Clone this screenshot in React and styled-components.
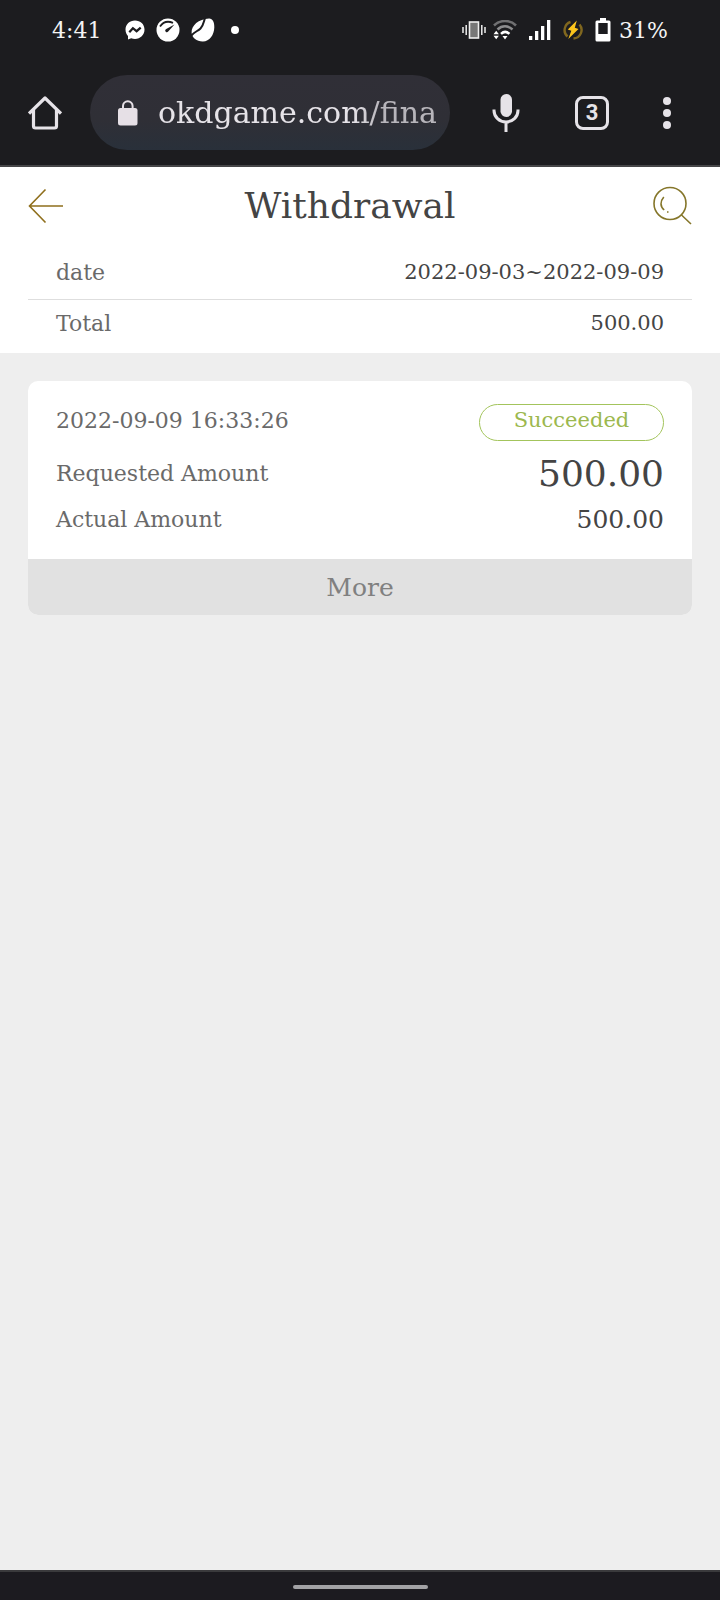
import React from 'react'
import styled, { createGlobalStyle } from 'styled-components'

const GlobalStyle = createGlobalStyle`
  * {
    box-sizing: border-box;
  }
  body {
    margin: 0;
    background: #eee;
    font-family: "DejaVu Serif", serif;
  }
  button {
    border: 0;
    padding: 0;
    background: none;
    font-family: inherit;
    cursor: pointer;
  }
  svg {
    display: block;
    flex: none;
  }
`

const Page = styled.div`
  display: flex;
  flex-direction: column;
  min-height: 100vh;
`

const Browser = styled.header`
  background: #1c1c1f;
  border-bottom: 2px solid #454547;
`

const StatusBar = styled.div`
  display: flex;
  justify-content: space-between;
  align-items: center;
  height: 60px;
  padding: 0 52px;
  color: #f4f4f4;
  font-size: 22px;
`

const StatusGroup = styled.div`
  display: flex;
  align-items: center;
  gap: ${({ $gap }) => $gap}px;
`

const Toolbar = styled.div`
  display: grid;
  grid-template-columns: 90px minmax(0, 1fr) 112px 60px 90px;
  align-items: center;
  height: 105px;
  padding-right: 8px;
`

const ToolButton = styled.button`
  display: flex;
  justify-content: center;
  align-items: center;
  height: 75px;
`

const AddressBar = styled.label`
  display: flex;
  align-items: center;
  gap: 20px;
  height: 75px;
  padding: 0 14px 0 28px;
  border-radius: 38px;
  background: linear-gradient(#302f37, #2f2f36 60%, #29303a);
`

const AddressInput = styled.input`
  flex: 1;
  min-width: 0;
  padding: 0;
  border: 0;
  outline: 0;
  background: none;
  color: #e6e3e8;
  font-family: inherit;
  font-size: 30px;
  mask-image: linear-gradient(to right, #000 70%, rgba(0, 0, 0, 0.75) 80%);
`

const Summary = styled.section`
  padding: 0 28px 7px;
  background: #fff;
`

const TitleBar = styled.div`
  display: grid;
  grid-template-columns: 34px 1fr 54px;
  align-items: center;
  height: 78px;
`

const Title = styled.h1`
  margin: 0;
  color: #444;
  font-size: 36px;
  font-weight: 400;
  line-height: 44px;
  text-align: center;
`

const SearchButton = styled.button`
  justify-self: end;
`

const SummaryRow = styled.div`
  display: flex;
  justify-content: space-between;
  align-items: center;
  height: ${({ $divider }) => ($divider ? 55 : 46)}px;
  padding: 0 28px;
  border-bottom: ${({ $divider }) => ($divider ? '1px solid #dedede' : '0')};
  font-size: 22px;
`

const Label = styled.span`
  color: #6a6a6a;
`

const Value = styled.span`
  color: #444;
  font-size: ${({ $size }) => $size}px;
`

const List = styled.main`
  flex: 1;
  padding: 28px;
`

const Card = styled.article`
  overflow: hidden;
  border-radius: 10px;
  background: #fff;
`

const CardBody = styled.div`
  padding: 23px 28px 17px;
  font-size: 22px;
`

const CardTop = styled.div`
  display: flex;
  justify-content: space-between;
  height: 38px;
  margin-bottom: 8px;
  line-height: 33px;
`

const CardRow = styled.div`
  display: flex;
  justify-content: space-between;
  align-items: center;
  height: 46px;
`

const Status = styled.span`
  width: 185px;
  height: 37px;
  border: 1px solid #a3c45c;
  border-radius: 19px;
  color: #9cb84e;
  font-size: 21px;
  line-height: 31px;
  text-align: center;
`

const MoreButton = styled.button`
  display: block;
  width: 100%;
  height: 56px;
  background: #e1e1e1;
  color: #808080;
  font-size: 25px;
`

const NavBar = styled.footer`
  display: flex;
  justify-content: center;
  align-items: center;
  height: 30px;
  padding-top: 2px;
  border-top: 2px solid #3a3a3c;
  background: #1c1b20;
`

const NavHandle = styled.div`
  width: 135px;
  height: 4px;
  border-radius: 2px;
  background: #a2a2a5;
`

const MessengerIcon = () => (
  <svg width="20" height="20" viewBox="0 0 20 20">
    <path d="M10 .5C4.600.5.500 4.300.500 9.600c0 2.700 1.100 5 2.500 6.400V19.500l3.200-1.200c1.100.4 2.500.7 3.800.7 5.400 0 9.500-4 9.500-9.400S15.400.5 10 .5z" fill="#fff" />
    <path d="M4.300 12.200l3.600-4 3.700 3 4.100-3.600" fill="none" stroke="#1c1c1f" strokeWidth="2.200" />
  </svg>
)

const GaugeIcon = () => (
  <svg width="24" height="24" viewBox="0 0 24 24">
    <circle cx="12" cy="12" r="11.500" fill="#fff" />
    <path d="M4 8.500C7 4 12 2.800 17 4.800" fill="none" stroke="#1c1c1f" strokeWidth="1.800" />
    <path d="M18.500 6.500L9.800 11.200a1.700 1.700 0 1 0 2.400 2.400z" fill="#1c1c1f" />
  </svg>
)

const LeafIcon = () => (
  <svg width="24" height="24" viewBox="0 0 24 24">
    <path d="M18 .5C21.500.3 23.500 4 23.300 9.500 23.100 17 18.500 23.300 12 23.500 6 23.700 1 20 .6 14.500.3 7.500 7.500 1 18 .5z" fill="#fff" />
    <path d="M14 0C12.500 4.500 12.500 7.500 9.500 10.500 6.500 13.500 3.500 13.500.5 17.500" fill="none" stroke="#1c1c1f" strokeWidth="2" />
  </svg>
)

const VibrateIcon = () => (
  <svg width="24" height="20" viewBox="0 0 24 20">
    <rect x="7.500" y="2" width="9" height="16" fill="#777" stroke="#eee" strokeWidth="1.600" />
    <path d="M1 7v6M4.200 5v10M19.800 5v10M23 7v6" stroke="#eee" strokeWidth="1.500" />
  </svg>
)

const WifiIcon = () => (
  <svg width="24" height="20" viewBox="0 0 24 20">
    <path d="M1 5.500C7-.5 17-.5 23 5.500" fill="none" stroke="#707072" strokeWidth="2.500" />
    <path d="M4.500 9.500c4.500-4.200 10.500-4.200 15 0" fill="none" stroke="#8c8c8e" strokeWidth="2.500" />
    <path d="M8 13.800c2.600-2.400 5.800-2.400 8.400 0" fill="none" stroke="#fff" strokeWidth="2.500" />
    <path d="M9.500 16h5L12 19.500zM.5 14.300l2.700-3.500 2.700 3.500zM.5 15.800h5.400l-2.700 3.500z" fill="#fff" />
  </svg>
)

const SignalIcon = () => (
  <svg width="22" height="20" viewBox="0 0 22 20">
    <path d="M0 16h3.300v4H0zM6 11h3.300v9H6zM12 6h3.300v14H12zM18 0h3.300v20H18z" fill="#fff" />
  </svg>
)

const BoltIcon = () => (
  <svg width="20" height="20" viewBox="0 0 20 20">
    <path d="M7.500 2A8.500 8.500 0 0 0 4.500 16.500M10.500 18.500A8.500 8.500 0 0 0 16.500 4.500" fill="none" stroke="#80671f" strokeWidth="2.400" />
    <path d="M13.800.5L4.800 9.500l3.500 1.300-3 8.200L15.500 9l-3.700-1.300z" fill="#fcc51c" />
  </svg>
)

const BatteryIcon = () => (
  <svg width="16" height="24" viewBox="0 0 16 24">
    <path d="M5 0h6v2.500H14a1.500 1.500 0 0 1 1.500 1.500v18a1.500 1.500 0 0 1-1.500 1.500H2A1.500 1.500 0 0 1 .5 22V4A1.500 1.500 0 0 1 2 2.500h3z" fill="#fff" />
    <path d="M3.300 5h9.400v11H3.300z" fill="#1c1c1f" />
  </svg>
)

const HomeIcon = () => (
  <svg width="34" height="34" viewBox="0 0 34 34" fill="none" stroke="#e6e3e8" strokeWidth="3.200" strokeLinejoin="round">
    <path d="M1 17.500L17 2l16 15.500" />
    <path d="M5.500 14v16a2 2 0 0 0 2 2h19a2 2 0 0 0 2-2V14" />
  </svg>
)

const LockIcon = () => (
  <svg width="20" height="26" viewBox="0 0 20 26">
    <rect x="0" y="8" width="19.500" height="17.500" rx="2.500" fill="#e6e0e6" />
    <path d="M5 9V6a4.800 4.800 0 0 1 9.600 0v3" fill="none" stroke="#e6e0e6" strokeWidth="2" />
  </svg>
)

const MicIcon = () => (
  <svg width="28" height="38" viewBox="0 0 28 38">
    <rect x="8.500" y="0" width="11.500" height="23" rx="5.700" fill="#e6e3e8" />
    <path d="M2 15.500v1a12 11.500 0 0 0 24 0v-1M14 28v10" fill="none" stroke="#e6e3e8" strokeWidth="3" />
  </svg>
)

const DotsIcon = () => (
  <svg width="8" height="32" viewBox="0 0 8 32" fill="#e6e3e8">
    <circle cx="4" cy="4" r="4" />
    <circle cx="4" cy="16" r="4" />
    <circle cx="4" cy="28" r="4" />
  </svg>
)

const TabCount = styled.span`
  width: 34px;
  height: 34px;
  border: 3px solid #e6e3e8;
  border-radius: 8px;
  color: #e6e3e8;
  font: 700 22px/28px Roboto, sans-serif;
  text-align: center;
`

const BackIcon = () => (
  <svg width="35" height="36" viewBox="0 0 35 36">
    <path d="M17.500 1.500L1.500 18l16 16.500M1.500 18H35" fill="none" stroke="#8f6f1c" strokeWidth="1.600" />
  </svg>
)

const SearchIcon = () => (
  <svg width="39" height="40" viewBox="0 0 39 40" fill="none" stroke="#85762a" strokeWidth="1.600">
    <circle cx="17" cy="17.500" r="16" />
    <path d="M28.500 29L38 38M10.800 11C7 15.500 7 20.500 11.200 24M14 26h1.500" />
  </svg>
)

function App() {
  return (
    <Page>
      <GlobalStyle />
      <Browser>
        <StatusBar>
          <StatusGroup $gap={16}>
            <StatusGroup $gap={24}>
              <span>4:41</span>
              <StatusGroup $gap={11}>
                <MessengerIcon />
                <GaugeIcon />
                <LeafIcon />
              </StatusGroup>
            </StatusGroup>
            <svg width="8" height="8" viewBox="0 0 8 8">
              <circle cx="4" cy="4" r="4" fill="#fff" />
            </svg>
          </StatusGroup>
          <StatusGroup $gap={12}>
            <StatusGroup $gap={7}>
              <VibrateIcon />
              <WifiIcon />
            </StatusGroup>
            <SignalIcon />
            <BoltIcon />
            <StatusGroup $gap={8}>
              <BatteryIcon />
              <span>31%</span>
            </StatusGroup>
          </StatusGroup>
        </StatusBar>
        <Toolbar>
          <ToolButton aria-label="Home">
            <HomeIcon />
          </ToolButton>
          <AddressBar>
            <LockIcon />
            <AddressInput aria-label="Address" defaultValue="okdgame.com/fina" />
          </AddressBar>
          <ToolButton aria-label="Voice search">
            <MicIcon />
          </ToolButton>
          <ToolButton aria-label="Tabs">
            <TabCount>3</TabCount>
          </ToolButton>
          <ToolButton aria-label="Menu">
            <DotsIcon />
          </ToolButton>
        </Toolbar>
      </Browser>

      <Summary>
        <TitleBar>
          <button aria-label="Back">
            <BackIcon />
          </button>
          <Title>Withdrawal</Title>
          <SearchButton aria-label="Search">
            <SearchIcon />
          </SearchButton>
        </TitleBar>
        <SummaryRow $divider>
          <Label>date</Label>
          <Value $size={21}>2022-09-03~2022-09-09</Value>
        </SummaryRow>
        <SummaryRow>
          <Label>Total</Label>
          <Value $size={21}>500.00</Value>
        </SummaryRow>
      </Summary>

      <List>
        <Card>
          <CardBody>
            <CardTop>
              <Label>2022-09-09 16:33:26</Label>
              <Status>Succeeded</Status>
            </CardTop>
            <CardRow>
              <Label>Requested Amount</Label>
              <Value $size={36}>500.00</Value>
            </CardRow>
            <CardRow>
              <Label>Actual Amount</Label>
              <Value $size={25}>500.00</Value>
            </CardRow>
          </CardBody>
          <MoreButton>More</MoreButton>
        </Card>
      </List>

      <NavBar>
        <NavHandle />
      </NavBar>
    </Page>
  )
}

export default App
